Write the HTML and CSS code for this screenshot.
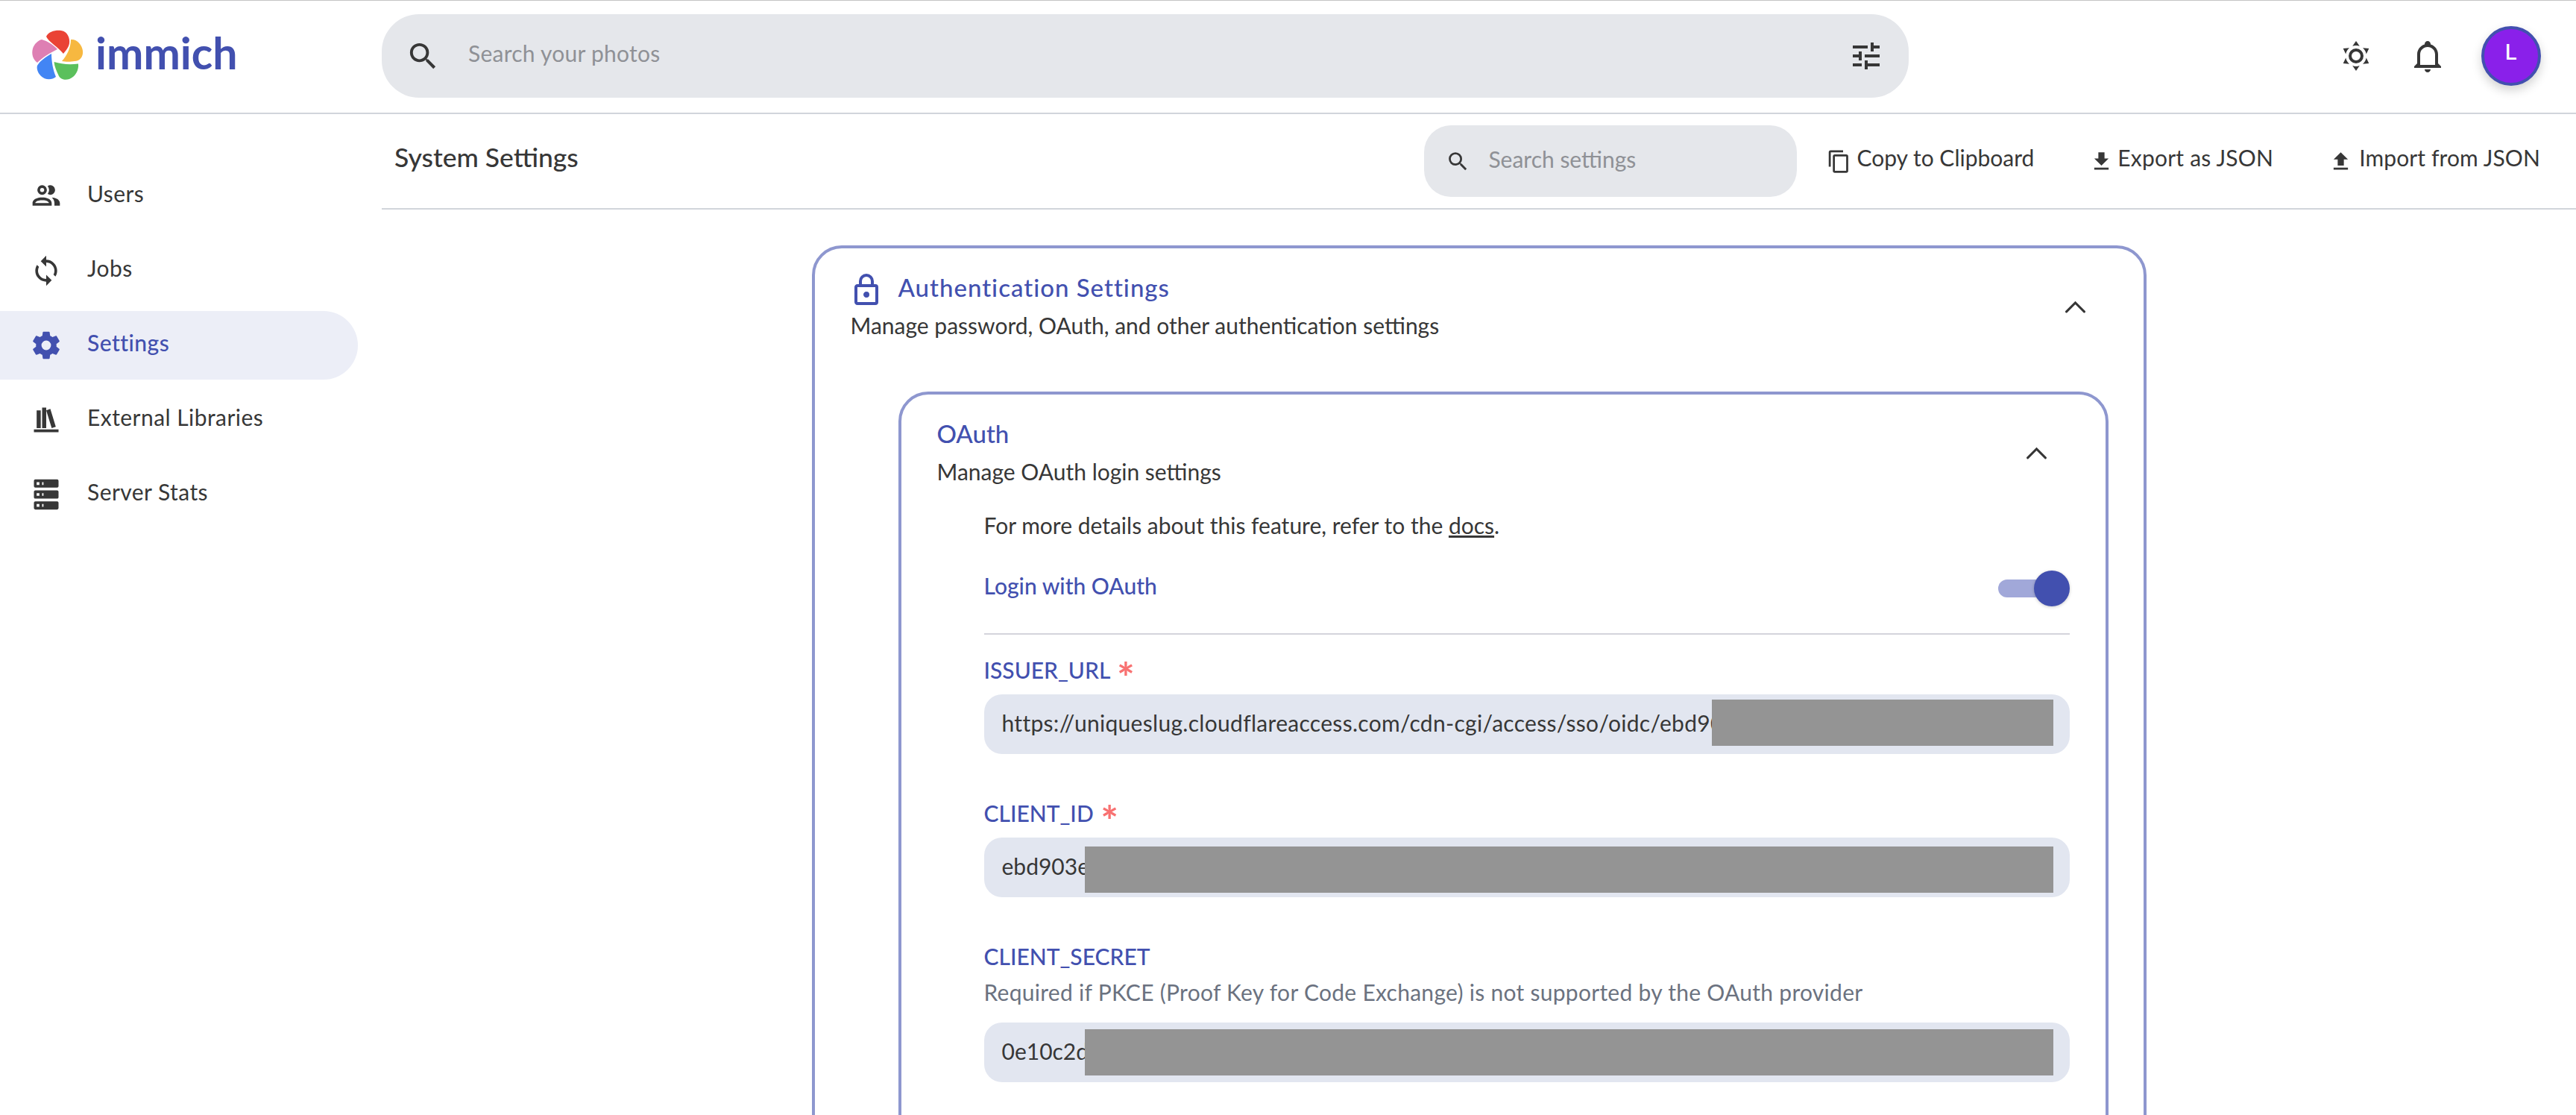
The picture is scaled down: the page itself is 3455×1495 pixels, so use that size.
FILE: index.html
```html
<!DOCTYPE html>
<html lang="en">

<head>
    <meta charset="UTF-8">
    <title>System Settings - Immich</title>
    <link rel="stylesheet" href="styles.css">
</head>

<body>
    <header class="topbar">
        <div class="brand">
            <svg class="brand-mark" viewBox="0 0 85 85">
                <path fill="#ea4335" d="M50 38C42 28 30 22 27 15C30 8 40 6 47 7C56 8 59 18 58 24C57 30 53 34 50 38Z" />
                <path fill="#f7b840" d="M48 48C55 40 60 30 60 19C68 18 75 26 76 34C77 42 72 48 65 48C60 49 53 49 48 48Z" />
                <path fill="#5bc05c" d="M37.5 49C47 52 58 53 70 51.5C71 60 66 69 58 72C52 74 46 72 44 68C41 62 38 55 37.5 49Z" />
                <path fill="#4285f4" d="M34 38C34 48 36 60 40 69C34 74 25 73 20 68C15 63 14 57 15 54C19 47 27 42 34 38Z" />
                <path fill="#de7fb3" d="M42 32C32 37 22 43 15 50C9 46 7 38 9 31C11 25 16 20 21 19C29 21 36 26 42 32Z" />
            </svg>
            <span class="brand-name">immich</span>
        </div>
        <div class="main-search">
            <svg class="icon icon-search" viewBox="0 0 24 24"><path d="M9.5,3A6.5,6.5 0 0,1 16,9.5C16,11.11 15.41,12.59 14.44,13.73L14.71,14H15.5L20.5,19L19,20.5L14,15.5V14.71L13.73,14.44C12.59,15.41 11.11,16 9.5,16A6.5,6.5 0 0,1 3,9.5A6.5,6.5 0 0,1 9.5,3M9.5,5C7,5 5,7 5,9.5C5,12 7,14 9.5,14C12,14 14,12 14,9.5C14,7 12,5 9.5,5Z" /></svg>
            <span class="placeholder">Search your photos</span>
            <svg class="icon icon-tune" viewBox="0 0 24 24"><path d="M3,17V19H9V17H3M3,5V7H13V5H3M13,21V19H21V17H13V15H11V21H13M7,9V11H3V13H7V15H9V9H7M21,13V11H11V13H21M15,9H17V7H21V5H17V3H15V9Z" /></svg>
        </div>
        <div class="topbar-right">
            <svg class="icon icon-top" viewBox="0 0 24 24"><path d="M12,7A5,5 0 0,1 17,12A5,5 0 0,1 12,17A5,5 0 0,1 7,12A5,5 0 0,1 12,7M12,9A3,3 0 0,0 9,12A3,3 0 0,0 12,15A3,3 0 0,0 15,12A3,3 0 0,0 12,9M12,2L14.39,5.42C13.65,5.15 12.84,5 12,5C11.16,5 10.35,5.15 9.61,5.42L12,2M3.34,7L7.5,6.65C6.9,7.16 6.36,7.78 5.94,8.5C5.5,9.24 5.25,10 5.11,10.79L3.34,7M3.36,17L5.12,13.23C5.26,14 5.53,14.78 5.95,15.5C6.37,16.24 6.91,16.86 7.5,17.37L3.36,17M20.65,7L18.88,10.79C18.74,10 18.47,9.23 18.05,8.5C17.63,7.78 17.1,7.15 16.5,6.64L20.65,7M20.64,17L16.5,17.36C17.09,16.85 17.62,16.22 18.04,15.5C18.46,14.77 18.73,14 18.87,13.21L20.64,17M12,22L9.59,18.56C10.33,18.83 11.14,19 12,19C12.82,19 13.63,18.83 14.37,18.56L12,22Z" /></svg>
            <svg class="icon icon-top" viewBox="0 0 24 24"><path d="M10 21H14C14 22.1 13.1 23 12 23S10 22.1 10 21M21 19V20H3V19L5 17V11C5 7.9 7 5.2 10 4.3V4C10 2.9 10.9 2 12 2S14 2.9 14 4V4.3C17 5.2 19 7.9 19 11V17L21 19M17 11C17 8.2 14.8 6 12 6S7 8.2 7 11V18H17V11Z" /></svg>
            <div class="avatar">L</div>
        </div>
    </header>

    <div class="layout">
        <nav class="sidebar">
            <a class="nav-item">
                <svg class="icon icon-nav" viewBox="0 0 24 24"><path d="M13.07 10.41A5 5 0 0 0 13.07 4.59A3.39 3.39 0 0 1 15 4A3.5 3.5 0 0 1 15 11A3.39 3.39 0 0 1 13.07 10.41M5.5 7.5A3.5 3.5 0 1 1 9 11A3.5 3.5 0 0 1 5.5 7.5M7.5 7.5A1.5 1.5 0 1 0 9 6A1.5 1.5 0 0 0 7.5 7.5M16 17V19H2V17S2 13 9 13 16 17 16 17M14 17C13.86 16.22 12.67 15 9 15S4.07 16.29 4 17M15.95 13A5.32 5.32 0 0 1 18 17V19H22V17S22 13.37 15.94 13Z" /></svg>
                <span>Users</span>
            </a>
            <a class="nav-item">
                <svg class="icon icon-nav" viewBox="0 0 24 24"><path d="M12,18A6,6 0 0,1 6,12C6,11 6.25,10.03 6.7,9.2L5.24,7.74C4.46,8.97 4,10.43 4,12A8,8 0 0,0 12,20V23L16,19L12,15M12,4V1L8,5L12,9V6A6,6 0 0,1 18,12C18,13 17.75,13.97 17.3,14.8L18.76,16.26C19.54,15.03 20,13.57 20,12A8,8 0 0,0 12,4Z" /></svg>
                <span>Jobs</span>
            </a>
            <a class="nav-item active">
                <svg class="icon icon-nav" viewBox="0 0 24 24"><path d="M12,15.5A3.5,3.5 0 0,1 8.5,12A3.5,3.5 0 0,1 12,8.5A3.5,3.5 0 0,1 15.5,12A3.5,3.5 0 0,1 12,15.5M19.43,12.97C19.47,12.65 19.5,12.33 19.5,12C19.5,11.67 19.47,11.34 19.43,11L21.54,9.37C21.73,9.22 21.78,8.95 21.66,8.73L19.66,5.27C19.54,5.05 19.27,4.96 19.05,5.05L16.56,6.05C16.04,5.66 15.5,5.32 14.87,5.07L14.5,2.42C14.46,2.18 14.25,2 14,2H10C9.75,2 9.54,2.18 9.5,2.42L9.13,5.07C8.5,5.32 7.96,5.66 7.44,6.05L4.95,5.05C4.73,4.96 4.46,5.05 4.34,5.27L2.34,8.73C2.21,8.95 2.27,9.22 2.46,9.37L4.57,11C4.53,11.34 4.5,11.67 4.5,12C4.5,12.33 4.53,12.65 4.57,12.97L2.46,14.63C2.27,14.78 2.21,15.05 2.34,15.27L4.34,18.73C4.46,18.95 4.73,19.03 4.95,18.95L7.44,17.94C7.96,18.34 8.5,18.68 9.13,18.93L9.5,21.58C9.54,21.82 9.75,22 10,22H14C14.25,22 14.46,21.82 14.5,21.58L14.87,18.93C15.5,18.67 16.04,18.34 16.56,17.94L19.05,18.95C19.27,19.03 19.54,18.95 19.66,18.73L21.66,15.27C21.78,15.05 21.73,14.78 21.54,14.63L19.43,12.97Z" /></svg>
                <span>Settings</span>
            </a>
            <a class="nav-item">
                <svg class="icon icon-nav" viewBox="0 0 24 24"><path d="M9 3V18H12V3H9M12 5L16 18L19 17L15 4L12 5M5 5V18H8V5H5M3 19V21H21V19H3Z" /></svg>
                <span>External Libraries</span>
            </a>
            <a class="nav-item">
                <svg class="icon icon-nav" viewBox="0 0 24 24"><path d="M4,1H20A1,1 0 0,1 21,2V6A1,1 0 0,1 20,7H4A1,1 0 0,1 3,6V2A1,1 0 0,1 4,1M4,9H20A1,1 0 0,1 21,10V14A1,1 0 0,1 20,15H4A1,1 0 0,1 3,14V10A1,1 0 0,1 4,9M4,17H20A1,1 0 0,1 21,18V22A1,1 0 0,1 20,23H4A1,1 0 0,1 3,22V18A1,1 0 0,1 4,17M9,5H10V3H9V5M9,13H10V11H9V13M9,21H10V19H9V21M5,3V5H7V3H5M5,11V13H7V11H5M5,19V21H7V19H5Z" /></svg>
                <span>Server Stats</span>
            </a>
        </nav>

        <main class="content">
            <div class="subbar">
                <h1>System Settings</h1>
                <div class="subbar-actions">
                    <div class="settings-search">
                        <svg class="icon icon-small-search" viewBox="0 0 24 24"><path d="M9.5,3A6.5,6.5 0 0,1 16,9.5C16,11.11 15.41,12.59 14.44,13.73L14.71,14H15.5L20.5,19L19,20.5L14,15.5V14.71L13.73,14.44C12.59,15.41 11.11,16 9.5,16A6.5,6.5 0 0,1 3,9.5A6.5,6.5 0 0,1 9.5,3M9.5,5C7,5 5,7 5,9.5C5,12 7,14 9.5,14C12,14 14,12 14,9.5C14,7 12,5 9.5,5Z" /></svg>
                        <span class="placeholder">Search settings</span>
                    </div>
                    <a class="action action-copy">
                        <svg class="icon icon-action" viewBox="0 0 24 24"><path d="M19,21H8V7H19M19,5H8A2,2 0 0,0 6,7V21A2,2 0 0,0 8,23H19A2,2 0 0,0 21,21V7A2,2 0 0,0 19,5M16,1H4A2,2 0 0,0 2,3V17H4V3H16V1Z" /></svg>
                        <span>Copy to Clipboard</span>
                    </a>
                    <a class="action action-export">
                        <svg class="icon icon-action" viewBox="0 0 24 24"><path d="M5,20H19V18H5M19,9H15V3H9V9H5L12,16L19,9Z" /></svg>
                        <span>Export as JSON</span>
                    </a>
                    <a class="action action-import">
                        <svg class="icon icon-action" viewBox="0 0 24 24"><path d="M9,16V10H5L12,3L19,10H15V16H9M5,20V18H19V20H5Z" /></svg>
                        <span>Import from JSON</span>
                    </a>
                </div>
            </div>

            <section class="card card-outer">
                <div class="card-head card-head-outer">
                    <div>
                        <div class="card-title card-title-icon">
                            <svg class="icon icon-lock" viewBox="0 0 24 24"><path d="M12,17C10.89,17 10,16.1 10,15C10,13.89 10.89,13 12,13A2,2 0 0,1 14,15A2,2 0 0,1 12,17M18,20V10H6V20H18M18,8A2,2 0 0,1 20,10V20A2,2 0 0,1 18,22H6C4.89,22 4,21.1 4,20V10C4,8.89 4.89,8 6,8H7V6A5,5 0 0,1 12,1A5,5 0 0,1 17,6V8H18M12,3A3,3 0 0,0 9,6V8H15V6A3,3 0 0,0 12,3Z" /></svg>
                            Authentication Settings
                        </div>
                        <div class="card-desc">Manage password, OAuth, and other authentication settings</div>
                    </div>
                    <svg class="chevron" viewBox="0 0 24 24"><path d="M6.6 14.9L12 9.5L17.4 14.9" /></svg>
                </div>

                <section class="card card-inner">
                    <div class="card-head card-head-inner">
                        <div>
                            <div class="card-title">OAuth</div>
                            <div class="card-desc">Manage OAuth login settings</div>
                        </div>
                        <svg class="chevron" viewBox="0 0 24 24"><path d="M6.6 14.9L12 9.5L17.4 14.9" /></svg>
                    </div>

                    <div class="card-body">
                        <p class="note">For more details about this feature, refer to the <a class="docs-link">docs</a>.</p>

                        <div class="toggle-row">
                            <span class="field-label">Login with OAuth</span>
                            <div class="toggle"><div class="toggle-knob"></div></div>
                        </div>
                        <hr class="divider">

                        <div class="field field-first">
                            <div class="field-label">ISSUER_URL <span class="required">*</span></div>
                            <div class="input input-issuer">
                                https://uniqueslug.cloudflareaccess.com/cdn-cgi/access/sso/oidc/ebd903e
                                <div class="redact"></div>
                            </div>
                        </div>

                        <div class="field">
                            <div class="field-label">CLIENT_ID <span class="required">*</span></div>
                            <div class="input input-client">
                                ebd903e
                                <div class="redact"></div>
                            </div>
                        </div>

                        <div class="field">
                            <div class="field-label">CLIENT_SECRET</div>
                            <div class="field-help">Required if PKCE (Proof Key for Code Exchange) is not supported by the OAuth provider</div>
                            <div class="input input-secret">
                                0e10c2d
                                <div class="redact"></div>
                            </div>
                        </div>
                    </div>
                </section>
            </section>
        </main>
    </div>
</body>

</html>
```

FILE: styles.css
```css
:root {
    --primary: #4250af;
    --text: #373737;
    --line: #d1d5db;
    --search-bg: #e5e7eb;
    --input-bg: #e2e6f0;
    --card-line: #8e97cf;
}

html,
body {
    height: 100%;
    overflow: hidden;
}

body {
    margin: 0;
    background-color: #fff;
    color: var(--text);
    font-family: "Lato", "Noto Sans", sans-serif;
    font-size: 30px;
    border-top: 1px solid #c4c4c4;
    box-sizing: border-box;
}

.icon {
    display: block;
    flex: none;
    fill: var(--text);
}

.placeholder {
    color: #8f9196;
}

/* top bar */
.topbar {
    display: flex;
    align-items: flex-start;
    height: 150px;
    border-bottom: 2px solid var(--line);
}

.brand {
    display: flex;
    align-items: center;
    width: 477px;
    height: 150px;
    padding-left: 35px;
}

.brand-mark {
    width: 85px;
    height: 85px;
    flex: none;
}

.brand-name {
    margin-left: 8px;
    margin-top: -12px;
    font-size: 59px;
    font-weight: 700;
    color: var(--primary);
}

.main-search {
    display: flex;
    align-items: center;
    width: 2048px;
    height: 112px;
    margin-top: 18px;
    background-color: var(--search-bg);
    border-radius: 50px;
}

.icon-search {
    width: 47px;
    height: 47px;
    margin-left: 32px;
}

.main-search .placeholder {
    margin-left: 37px;
    margin-top: -8px;
    letter-spacing: 0.25px;
    flex: 1;
}

.icon-tune {
    width: 48px;
    height: 48px;
    margin-right: 33px;
}

.topbar-right {
    display: flex;
    align-items: center;
    margin-left: auto;
    margin-right: 47px;
    margin-top: 34px;
}

.icon-top {
    width: 48px;
    height: 48px;
    margin-right: 48px;
}

.avatar {
    width: 80px;
    height: 80px;
    box-sizing: border-box;
    border: 4px solid var(--primary);
    border-radius: 50%;
    background-color: #8a20ea;
    color: #fff;
    font-family: "Inter", sans-serif;
    font-size: 29px;
    font-weight: 500;
    line-height: 62px;
    text-align: center;
    box-shadow: 0 6px 14px rgba(0, 0, 0, 0.18);
}

/* page layout */
.layout {
    display: flex;
}

.sidebar {
    flex: none;
    width: 480px;
    margin-right: 32px;
    padding-top: 64px;
    display: flex;
    flex-direction: column;
    gap: 8px;
}

.nav-item {
    display: flex;
    align-items: center;
    height: 92px;
    padding-left: 40px;
    border-radius: 0 46px 46px 0;
}

.nav-item span {
    margin-left: 33px;
    margin-top: -8px;
    letter-spacing: 0.45px;
}

.nav-item.active {
    background-color: #eceef7;
    color: var(--primary);
    font-weight: 500;
}

.nav-item.active .icon {
    fill: var(--primary);
}

.icon-nav {
    width: 44px;
    height: 44px;
}

.content {
    flex: 1;
    min-width: 0;
}

.subbar {
    display: flex;
    align-items: center;
    height: 126px;
    padding-left: 17px;
    padding-right: 48px;
    border-bottom: 2px solid var(--line);
}

.subbar h1 {
    margin: 0;
    margin-top: -11px;
    font-size: 35.5px;
    font-weight: 500;
}

.subbar-actions {
    display: flex;
    align-items: center;
    margin-left: auto;
}

.settings-search {
    display: flex;
    align-items: center;
    width: 500px;
    height: 96px;
    background-color: var(--search-bg);
    border-radius: 36px;
    margin-right: 40px;
}

.icon-small-search {
    width: 33px;
    height: 33px;
    margin-left: 29px;
}

.settings-search .placeholder {
    margin-left: 24px;
    margin-top: -6px;
}

.action {
    display: flex;
    align-items: center;
}

.action span {
    margin-top: -10px;
    letter-spacing: 0.2px;
}

.action-copy {
    margin-right: 74px;
}

.action-copy span {
    margin-left: 7px;
    letter-spacing: 0;
}

.action-export {
    margin-right: 74px;
}

.action-export span {
    margin-left: 5px;
}

.action-import span {
    margin-left: 8px;
    letter-spacing: 0.1px;
}

.icon-action {
    width: 33px;
    height: 33px;
}

/* settings cards */
.card {
    box-sizing: border-box;
    border: 4px solid var(--card-line);
    border-radius: 40px;
}

.card-outer {
    width: 1790px;
    margin: 48px auto 0;
    height: 2400px;
}

.card-inner {
    margin-left: 112px;
    margin-right: 47px;
    margin-top: 62px;
    height: 2200px;
}

.card-head {
    display: flex;
    align-items: center;
    justify-content: space-between;
}

.card-head-outer {
    padding: 26px 65px 0 48px;
}

.card-head-inner {
    padding: 26px 66px 0 48px;
}

.card-title {
    height: 52px;
    line-height: 52px;
    font-size: 33px;
    font-weight: 500;
    color: var(--primary);
}

.card-title-icon {
    display: flex;
    align-items: flex-start;
    letter-spacing: 1px;
}

.icon-lock {
    width: 48px;
    height: 48px;
    fill: var(--primary);
    margin: 6px 19px 0 -3px;
}

.card-desc {
    height: 52px;
    line-height: 50px;
}

.chevron {
    display: block;
    flex: none;
    width: 53px;
    height: 53px;
    fill: none;
    stroke: var(--text);
    stroke-width: 1.4;
    stroke-linecap: round;
}

.card-body {
    margin: 20px 48px 0 111px;
}

.note {
    margin: 0;
    height: 52px;
    line-height: 50px;
}

.docs-link {
    text-decoration: underline;
}

.toggle-row {
    display: flex;
    align-items: center;
    justify-content: space-between;
    height: 48px;
    margin-top: 34px;
}

.toggle-row .field-label {
    margin-top: -6px;
}

.toggle {
    position: relative;
    width: 80px;
    height: 24px;
    margin-right: 16px;
    border-radius: 12px;
    background-color: #a1a8d9;
}

.toggle-knob {
    position: absolute;
    top: -12px;
    right: -16px;
    width: 48px;
    height: 48px;
    border-radius: 50%;
    background-color: var(--primary);
    box-shadow: 0 1px 4px rgba(0, 0, 0, 0.2);
}

.divider {
    margin: 36px 0 0;
    border: 0;
    border-top: 2px solid #d4d4dc;
}

.field {
    margin-top: 54px;
}

.field-first {
    margin-top: 21px;
}

.field-label {
    height: 52px;
    line-height: 50px;
    font-weight: 500;
    color: var(--primary);
}

.field-first .field-label {
    line-height: 53px;
}

.required {
    margin-left: 2px;
    color: #f87171;
    font-size: 56px;
    font-weight: 700;
    line-height: 0;
    vertical-align: -19px;
}

.field-help {
    height: 44px;
    line-height: 42px;
    letter-spacing: 0.28px;
    color: #6b7280;
}

.input {
    position: relative;
    display: flex;
    align-items: center;
    height: 80px;
    margin-top: 7px;
    padding-left: 24px;
    padding-bottom: 4px;
    box-sizing: border-box;
    background-color: var(--input-bg);
    border-radius: 24px;
    white-space: nowrap;
    overflow: hidden;
}

.input-issuer {
    letter-spacing: 0.3px;
}

.input-client {
    margin-top: 6px;
}

.input-secret {
    margin-top: 18px;
}

.redact {
    position: absolute;
    right: 22px;
    height: 62px;
    background-color: #949494;
}

.input-issuer .redact {
    top: 7px;
    left: 976px;
}

.input-client .redact {
    top: 12px;
    left: 135px;
}

.input-secret .redact {
    top: 9px;
    left: 135px;
}
```
